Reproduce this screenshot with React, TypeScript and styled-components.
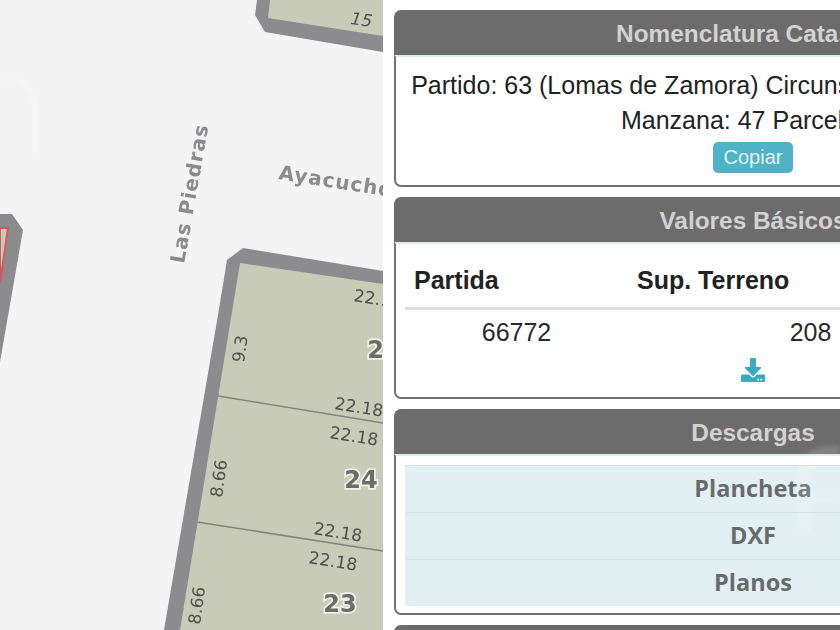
import React from "react";
import styled, { createGlobalStyle } from "styled-components";
import { FaDownload } from "react-icons/fa";

const Global = createGlobalStyle`
  html, body { margin: 0; padding: 0; height: 100%; overflow: hidden; background: #fff; }
  #root { height: 100%; }
`;

const Page = styled.div`
  position: relative;
  display: flex;
  width: 840px;
  height: 630px;
  overflow: hidden;
  font-family: "Liberation Sans", Arial, sans-serif;
  color: #222;
`;

const MapPane = styled.div`
  flex: 0 0 383px;
  height: 630px;
  background: #f4f4f5;
  overflow: hidden;
`;

const MapSvg = styled.svg`
  display: block;
  filter: blur(0.6px);
`;

const Dim = styled.text`
  font-family: "DejaVu Sans", sans-serif;
  font-size: 17px;
  fill: #4f524a;
`;

const LotNumber = styled.text`
  font-family: "DejaVu Sans", sans-serif;
  font-weight: 700;
  font-size: 24px;
  fill: #6b6e66;
  stroke: #f1f3ea;
  stroke-width: 3.5px;
  paint-order: stroke;
  text-anchor: middle;
`;

const Street = styled.text`
  font-family: "DejaVu Sans", sans-serif;
  font-weight: 700;
  font-size: 20px;
  letter-spacing: 1px;
  fill: #8b8b8d;
`;

const Side = styled.div`
  flex: 0 0 auto;
  display: flex;
  flex-direction: column;
  gap: 10px;
  width: 718px;
  padding: 10px 0 0 11px;
`;

const Panel = styled.section`
  border-radius: 7px;
  background: #fff;
  flex: 0 0 auto;
`;

const PanelHead = styled.h2`
  margin: 0;
  height: 45px;
  line-height: 47px;
  background: #6c6c6c;
  border-radius: 7px 7px 0 0;
  color: #d3d1d1;
  font-size: 24.4px;
  font-weight: 700;
  text-align: center;
`;

const PanelBody = styled.div<{ $pad: string }>`
  padding: ${(p) => p.$pad};
  border: 2px solid #737373;
  border-top: 2px solid #dcedf2;
  border-radius: 0 0 7px 7px;
  text-align: center;
`;

const NomenLine = styled.p`
  margin: 0;
  font-size: 25px;
  line-height: 35px;
  white-space: nowrap;
  color: #222;
`;

const CopyButton = styled.button`
  display: block;
  width: 80px;
  height: 31px;
  margin: 4px auto 0;
  padding: 0;
  border: 0;
  border-radius: 5px;
  background: #4fb2c5;
  color: #e2f2f5;
  font-family: inherit;
  font-size: 20px;
`;

const ValuesGrid = styled.div`
  display: grid;
  grid-template-columns: 223px 365px 108px;
  text-align: left;
  font-size: 25px;
`;

const HeadCell = styled.div`
  height: 63px;
  line-height: 72px;
  padding-left: 9px;
  font-weight: 700;
  color: #222;
  border-bottom: 3px solid #dedede;
`;

const ValueCell = styled.div`
  height: 44px;
  line-height: 44px;
  text-align: center;
  color: #2a2a2a;
`;

const IconRow = styled.div`
  display: flex;
  justify-content: center;
  box-sizing: border-box;
  padding-top: 4px;
  height: 43px;
  color: #3aaabe;
  font-size: 24px;
`;

const DownloadList = styled.ul`
  list-style: none;
  margin: 0;
  padding: 0;
`;

const DownloadRow = styled.li`
  height: 46px;
  line-height: 45px;
  background: #e3f0f3;
  border-top: 1px solid #d2e0e4;
  font-family: "Open Sans", sans-serif;
  font-weight: 700;
  font-size: 23.5px;
  color: #686b6d;
  text-align: center;
`;

const Watermark = styled.svg`
  position: absolute;
  left: 0;
  top: 0;
  pointer-events: none;
  filter: blur(2px);
`;

const rot = (a: number, x: number, y: number) => `rotate(${a} ${x} ${y})`;

const MapDrawing = () => (
  <MapSvg width="383" height="630" viewBox="0 0 383 630">
    <polygon points="257,0 255,15 265,32 383,52 383,0" fill="#8c8c8e" />
    <polygon points="270,0 268,18 383,36 383,0" fill="#c7cbb8" />
    <Dim x="350" y="24" transform={rot(8, 350, 24)} fontStyle="italic">15</Dim>

    <polygon points="0,214 12,214 23,230 0,362" fill="#8c8c8e" />
    <polygon points="0,228 8,228 0,283" fill="#c7cbb8" stroke="#d65a5c" strokeWidth="2" />

    <polygon points="243,248 383,271 383,630 164,630 218,315 227,260" fill="#8c8c8e" />
    <polygon points="240,263 383,284 383,630 180,630" fill="#c7cbb8" />
    <line x1="218" y1="396" x2="383" y2="423" stroke="#83867a" strokeWidth="1.6" />
    <line x1="197" y1="522" x2="383" y2="551" stroke="#83867a" strokeWidth="1.6" />

    <Street x="184" y="264" transform={rot(-80, 184, 264)}>Las Piedras</Street>
    <Street x="278" y="179" transform={rot(9, 278, 179)}>Ayacucho</Street>

    <Dim x="353" y="301" transform={rot(9, 353, 301)}>22.18</Dim>
    <Dim x="244" y="363" transform={rot(-82, 244, 363)}>9.3</Dim>
    <LotNumber x="384" y="358">24</LotNumber>
    <Dim x="334" y="409" transform={rot(9, 334, 409)}>22.18</Dim>
    <Dim x="329" y="438" transform={rot(9, 329, 438)}>22.18</Dim>
    <LotNumber x="361" y="488">24</LotNumber>
    <Dim x="222" y="498" transform={rot(-82, 222, 498)}>8.66</Dim>
    <Dim x="313" y="534" transform={rot(9, 313, 534)}>22.18</Dim>
    <Dim x="308" y="563" transform={rot(9, 308, 563)}>22.18</Dim>
    <LotNumber x="340" y="612">23</LotNumber>
    <Dim x="200" y="625" transform={rot(-82, 200, 625)}>8.66</Dim>
  </MapSvg>
);

export default function App() {
  return (
    <Page>
      <Global />
      <MapPane>
        <MapDrawing />
      </MapPane>
      <Side>
        <Panel>
          <PanelHead>Nomenclatura Catastral</PanelHead>
          <PanelBody $pad="11px 8px 12px">
            <NomenLine>Partido: 63 (Lomas de Zamora) Circunscripción: 1 Sección: M</NomenLine>
            <NomenLine>Manzana: 47 Parcela: 7</NomenLine>
            <CopyButton>Copiar</CopyButton>
          </PanelBody>
        </Panel>
        <Panel>
          <PanelHead>Valores Básicos</PanelHead>
          <PanelBody $pad="0 9px">
            <ValuesGrid>
              <HeadCell>Partida</HeadCell>
              <HeadCell>Sup. Terreno</HeadCell>
              <HeadCell>Valor</HeadCell>
              <ValueCell>66772</ValueCell>
              <ValueCell>208</ValueCell>
              <ValueCell />
            </ValuesGrid>
            <IconRow>
              <FaDownload />
            </IconRow>
          </PanelBody>
        </Panel>
        <Panel>
          <PanelHead>Descargas</PanelHead>
          <PanelBody $pad="9px 9px 7px">
            <DownloadList>
              <DownloadRow>Plancheta</DownloadRow>
              <DownloadRow>DXF</DownloadRow>
              <DownloadRow>Planos</DownloadRow>
            </DownloadList>
          </PanelBody>
        </Panel>
        <Panel>
          <PanelHead>Otros Datos</PanelHead>
        </Panel>
      </Side>
      <Watermark width="840" height="630" viewBox="0 0 840 630">
        <path d="M0 78 C22 76 35 90 35 110 L35 156" fill="none" stroke="#fff" strokeOpacity="0.3" strokeWidth="6" />
        <path d="M805 533 L805 475 C805 460 815 452 830 452 L840 452" fill="none" stroke="#fff" strokeOpacity="0.14" strokeWidth="13" />
        <path d="M812 497 L840 497" fill="none" stroke="#fff" strokeOpacity="0.12" strokeWidth="10" />
      </Watermark>
    </Page>
  );
}
